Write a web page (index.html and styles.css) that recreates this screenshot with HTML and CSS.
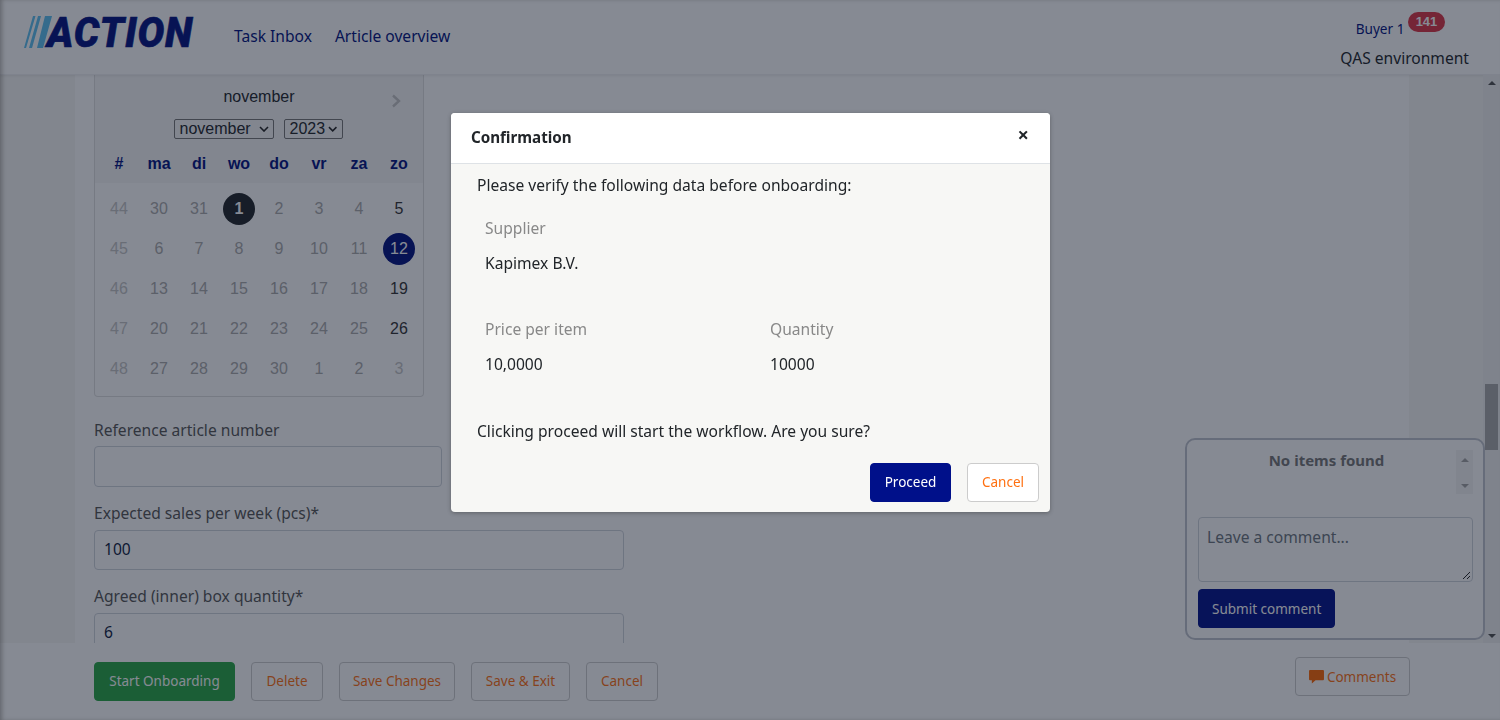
FILE: index.html
```html
<!DOCTYPE html>
<html lang="en">
<head>
  <meta charset="UTF-8" />
  <meta name="viewport" content="width=device-width, initial-scale=1" />
  <title>Article onboarding</title>
  <link rel="stylesheet" href="styles.css">
</head>
<body>
  <header class="topbar">
    <div class="logo">
      <svg class="logo-bars" width="28" height="32" viewBox="0 0 28 32">
        <polygon points="9,0 11.5,0 2,32 0,32" fill="#5cc0f0" />
        <polygon points="14,0 17,0 8,32 5,32" fill="#5cc0f0" />
        <polygon points="21,0 28,0 19,32 13,32" fill="#5cc0f0" />
      </svg>
      <span class="logo-text">ACTION</span>
    </div>
    <nav class="nav">
      <a href="#">Task Inbox</a>
      <a href="#">Article overview</a>
    </nav>
    <div class="user">
      <div class="user-name">Buyer 1 <span class="badge">141</span></div>
      <div class="env">QAS environment</div>
    </div>
  </header>

  <div class="middle">
    <main class="content">
      <div class="calendar">
        <div class="cal-top">
          <div class="cal-title">november <span class="cal-next">
            <svg width="10" height="14" viewBox="0 0 10 14"><path d="M2 1.5 L8 7 L2 12.5" fill="none" stroke="#c4c4c4" stroke-width="2.4" /></svg>
          </span></div>
          <div class="cal-selects">
            <span class="fake-select month">november <svg width="10" height="6" viewBox="0 0 10 6"><path d="M1 1 L5 5 L9 1" fill="none" stroke="#222" stroke-width="1.6" /></svg></span>
            <span class="fake-select year">2023 <svg width="10" height="6" viewBox="0 0 10 6"><path d="M1 1 L5 5 L9 1" fill="none" stroke="#222" stroke-width="1.6" /></svg></span>
          </div>
          <div class="cal-grid cal-head">
            <span>#</span><span>ma</span><span>di</span><span>wo</span><span>do</span><span>vr</span><span>za</span><span>zo</span>
          </div>
        </div>
        <div class="cal-grid cal-body">
          <span class="wk">44</span><span class="off">30</span><span class="off">31</span><span><b class="today">1</b></span><span class="off">2</span><span class="off">3</span><span class="off">4</span><span class="on">5</span>
          <span class="wk">45</span><span class="off">6</span><span class="off">7</span><span class="off">8</span><span class="off">9</span><span class="off">10</span><span class="off">11</span><span><b class="picked">12</b></span>
          <span class="wk">46</span><span class="off">13</span><span class="off">14</span><span class="off">15</span><span class="off">16</span><span class="off">17</span><span class="off">18</span><span class="on">19</span>
          <span class="wk">47</span><span class="off">20</span><span class="off">21</span><span class="off">22</span><span class="off">23</span><span class="off">24</span><span class="off">25</span><span class="on">26</span>
          <span class="wk">48</span><span class="off">27</span><span class="off">28</span><span class="off">29</span><span class="off">30</span><span class="off">1</span><span class="off">2</span><span class="wk">3</span>
        </div>
      </div>

      <div class="field first">
        <label>Reference article number</label>
        <div class="input short"></div>
      </div>
      <div class="field">
        <label>Expected sales per week (pcs)*</label>
        <div class="input">100</div>
      </div>
      <div class="field">
        <label>Agreed (inner) box quantity*</label>
        <div class="input">6</div>
      </div>
    </main>

    <div class="scrollbar">
      <span class="arrow up"></span>
      <span class="thumb"></span>
      <span class="arrow down"></span>
    </div>
  </div>

  <footer class="actions">
    <button class="btn btn-green w-start">Start Onboarding</button>
    <button class="btn w-small">Delete</button>
    <button class="btn w-changes">Save Changes</button>
    <button class="btn w-exit">Save &amp; Exit</button>
    <button class="btn w-small">Cancel</button>
    <button class="btn btn-comments">
      <svg width="15" height="14" viewBox="0 0 16 15"><path d="M1 0 H15 a1 1 0 0 1 1 1 V10 a1 1 0 0 1 -1 1 H7 L3 14.5 V11 H1 a1 1 0 0 1 -1 -1 V1 a1 1 0 0 1 1 -1 Z" fill="#ff6600" /></svg>
      Comments
    </button>
  </footer>

  <aside class="comments">
    <div class="comments-list">
      <strong>No items found</strong>
      <div class="mini-scroll"><span class="arrow up"></span><span class="arrow down"></span></div>
    </div>
    <div class="comment-box">Leave a comment...
      <svg class="grip" width="9" height="9" viewBox="0 0 9 9"><path d="M1 8 L8 1 M5 8 L8 5" stroke="#222" stroke-width="1" /></svg>
    </div>
    <button class="btn-navy">Submit comment</button>
  </aside>

  <div class="backdrop"></div>

  <div class="modal">
    <div class="modal-head">
      <h5>Confirmation</h5>
      <span class="close">&times;</span>
    </div>
    <div class="modal-body">
      <p class="intro">Please verify the following data before onboarding:</p>
      <dl class="item">
        <dt>Supplier</dt>
        <dd>Kapimex B.V.</dd>
      </dl>
      <div class="item-row">
        <dl class="item">
          <dt>Price per item</dt>
          <dd>10,0000</dd>
        </dl>
        <dl class="item">
          <dt>Quantity</dt>
          <dd>10000</dd>
        </dl>
      </div>
      <p class="outro">Clicking proceed will start the workflow. Are you sure?</p>
      <div class="modal-foot">
        <button class="btn-navy proceed">Proceed</button>
        <button class="btn w-small">Cancel</button>
      </div>
    </div>
  </div>
</body>
</html>
```

FILE: styles.css
```css
* {
  box-sizing: border-box;
}
html, body {
  margin: 0;
  height: 720px;
  overflow: hidden;
}
body {
  display: flex;
  flex-direction: column;
  font-family: "Noto Sans", "Open Sans", sans-serif;
  font-size: 15.6px;
  color: #212529;
  background: #fff;
}

/* header */
.topbar {
  display: flex;
  align-items: flex-start;
  height: 75px;
  padding-left: 24px;
  background: #fff;
  border-bottom: 1px solid #f0f0f3;
  box-shadow: 0 1px 3px rgba(0,0,0,0.08);
  position: relative;
}
.logo {
  display: flex;
  align-items: center;
  height: 32px;
  margin-top: 16px;
  width: 210px;
}
.logo-bars {
  flex: none;
  margin-right: -5px;
}
.logo-text {
  font-family: Roboto, "Liberation Sans", sans-serif;
  font-weight: 900;
  font-style: italic;
  font-size: 43px;
  line-height: 34px;
  letter-spacing: 0.9px;
  color: #001080;
  -webkit-text-stroke: 0.6px #001080;
  transform: scaleX(0.93);
  transform-origin: left center;
}
.nav {
  display: flex;
  gap: 23px;
  margin-top: 25px;
}
.nav a {
  color: #001080;
  text-decoration: none;
}
.user {
  margin-left: auto;
  padding-right: 31px;
  text-align: right;
}
.user-name {
  margin-top: 19px;
  padding-right: 24px;
  font-size: 13.6px;
  color: #001080;
}
.badge {
  display: inline-block;
  position: relative;
  top: -8px;
  width: 37px;
  height: 20px;
  line-height: 20px;
  border-radius: 10px;
  background: #dc3545;
  color: #fff;
  text-align: center;
  font-family: "Liberation Sans", sans-serif;
  font-size: 13px;
  font-weight: bold;
}
.env {
  margin-top: 7px;
}

/* scrolling part */
.middle {
  display: flex;
  height: 568px;
  overflow: hidden;
  background: #f7f7f5;
}
.content {
  width: 1334px;
  margin-left: 75px;
  padding-left: 19px;
  background: #fff;
  overflow: hidden;
}
.calendar {
  width: 330px;
  height: 322px;
  border: 1px solid #dfdfdf;
  border-top: none;
  border-radius: 0 0 4px 4px;
  font-family: "Liberation Sans", sans-serif;
  background: #fff;
}
.cal-top {
  height: 108px;
  background: #f7f7f7;
  overflow: hidden;
}
.cal-title {
  position: relative;
  padding-top: 12px;
  text-align: center;
  font-size: 16px;
  line-height: 19px;
}
.cal-next {
  position: absolute;
  right: 22px;
  top: 18px;
}
.cal-selects {
  display: flex;
  justify-content: center;
  gap: 10px;
  margin-top: 13px;
  padding-right: 2px;
}
.fake-select {
  display: flex;
  align-items: center;
  justify-content: space-between;
  gap: 3px;
  height: 20px;
  padding: 0 4px 0 5px;
  border: 1px solid #767676;
  border-radius: 2px;
  font-size: 16px;
}
.fake-select.month {
  width: 100px;
}
.fake-select.year {
  width: 59px;
}
.cal-grid {
  display: grid;
  grid-template-columns: repeat(8, 40px);
  padding-left: 4px;
  text-align: center;
}
.cal-head {
  padding-top: 7px;
  margin-top: 8px;
  line-height: 20px;
  font-size: 16px;
  font-weight: bold;
  color: #001080;
}
.cal-body {
  grid-auto-rows: 40px;
  background: #fff;
  line-height: 40px;
  font-size: 16px;
  padding-top: 6px;
}
.cal-body span {
  display: flex;
  align-items: center;
  justify-content: center;
}
.cal-body .wk {
  color: #c4c4c4;
}
.cal-body .off {
  color: #aaa;
}
.cal-body .on {
  color: #333;
}
.today, .picked {
  display: block;
  width: 32px;
  height: 32px;
  line-height: 32px;
  border-radius: 50%;
  font-weight: normal;
  color: #fff;
}
.today {
  background: #212529;
  font-weight: bold;
}
.picked {
  background: #001080;
}

.field {
  margin-top: 16px;
}
.field.first {
  margin-top: 23px;
}
.field label {
  display: block;
  height: 27px;
  line-height: 20px;
  color: #555;
}
.field.first label {
  height: 26px;
}
.input {
  width: 530px;
  height: 40px;
  padding: 6px 9px;
  border: 1px solid #ced4da;
  border-radius: 4px;
  line-height: 24px;
  color: #0d1a40;
}
.input.short {
  width: 348px;
  height: 41px;
}

.scrollbar {
  display: flex;
  flex-direction: column;
  align-items: center;
  justify-content: space-between;
  width: 17px;
  margin-left: auto;
  padding: 6px 0 5px;
  background: #f1f1f1;
  position: relative;
}
.arrow {
  display: block;
  width: 0;
  height: 0;
  border-left: 4px solid transparent;
  border-right: 4px solid transparent;
}
.arrow.up {
  border-bottom: 4px solid #505050;
}
.arrow.down {
  border-top: 4px solid #505050;
}
.thumb {
  position: absolute;
  top: 309px;
  left: 2px;
  width: 13px;
  height: 66px;
  background: #a8a8a8;
}

/* footer */
.actions {
  display: flex;
  align-items: flex-start;
  gap: 16px;
  flex: 1;
  padding: 19px 90px 0 94px;
  background: #fff;
}
.btn {
  height: 39px;
  padding: 0 0 2px;
  border: 1px solid #ccc;
  border-radius: 4px;
  background: #fff;
  color: #ff7010;
  font-family: inherit;
  font-size: 13.5px;
}
.w-start {
  width: 141px;
}
.w-small {
  width: 72px;
}
.w-changes {
  width: 116px;
}
.w-exit {
  width: 99px;
}
.btn-green {
  background: #28a745;
  border-color: #28a745;
  color: #fff;
}
.btn-comments {
  display: flex;
  align-items: center;
  justify-content: center;
  gap: 3px;
  width: 115px;
  padding: 0;
  margin-left: auto;
  margin-top: -5px;
}

/* floating comments panel */
.comments {
  position: absolute;
  left: 1185px;
  top: 438px;
  width: 300px;
  height: 202px;
  padding: 9px 10px 0 11px;
  border: 2px solid #bfc3cc;
  border-radius: 10px;
  background: #fff;
}
.comments-list {
  position: relative;
  height: 68px;
  text-align: center;
  padding-right: 18px;
  font-size: 15px;
  color: #777;
  line-height: 22px;
}
.mini-scroll {
  position: absolute;
  top: 1px;
  right: 0;
  width: 17px;
  height: 44px;
  padding: 8px 0 6px;
  display: flex;
  flex-direction: column;
  align-items: center;
  justify-content: space-between;
  background: #f4f4f4;
}
.mini-scroll .arrow.up {
  border-bottom-color: #a3a3a3;
}
.mini-scroll .arrow.down {
  border-top-color: #a3a3a3;
}
.comment-box {
  position: relative;
  height: 65px;
  padding: 8px;
  border: 1px solid #ced4da;
  border-radius: 4px;
  line-height: 22px;
  color: #6c757d;
}
.grip {
  position: absolute;
  right: 1px;
  bottom: 1px;
}
.btn-navy {
  height: 39px;
  margin-top: 7px;
  padding: 0 13px;
  border: 1px solid #00108a;
  border-radius: 4px;
  background: #00108a;
  color: #fff;
  font-family: inherit;
  font-size: 13.5px;
}

/* dialog */
.backdrop {
  position: fixed;
  inset: 0;
  background: rgba(13,21,39,0.5);
  box-shadow: inset 3px 0 4px -1px rgba(0,0,0,0.25);
}
.modal {
  position: fixed;
  left: 451px;
  top: 113px;
  width: 599px;
  height: 399px;
  border-radius: 4px;
  background: #f7f7f5;
  box-shadow: 0 1px 4px rgba(0,0,0,0.3);
  overflow: hidden;
}
.modal-head {
  display: flex;
  justify-content: space-between;
  height: 51px;
  padding: 14px 20px;
  background: #fff;
  border-bottom: 1px solid #dee2e6;
}
.modal-head h5 {
  margin: 0;
  font-size: 15.2px;
  line-height: 20px;
  font-weight: bold;
}
.close {
  font-size: 20px;
  font-weight: bold;
  line-height: 15px;
  margin-right: 1px;
}
.modal-body {
  padding: 11px 11px 0 26px;
}
.intro, .outro {
  margin: 0;
  line-height: 20px;
}
.item {
  flex: none;
  margin: 23px 0 0 8px;
  width: 285px;
  height: 78px;
}
.item + .item {
  margin-left: 0;
}
.item dt {
  height: 35px;
  line-height: 20px;
  color: #888;
}
.item dd {
  margin: 0;
  line-height: 20px;
}
.item-row {
  display: flex;
}
.outro {
  margin-top: 24px;
}
.modal-foot {
  display: flex;
  justify-content: flex-end;
  align-items: flex-start;
  gap: 16px;
  margin-top: 22px;
}
.proceed {
  margin-top: 0;
  width: 81px;
  padding: 0 0 2px;
}
```
